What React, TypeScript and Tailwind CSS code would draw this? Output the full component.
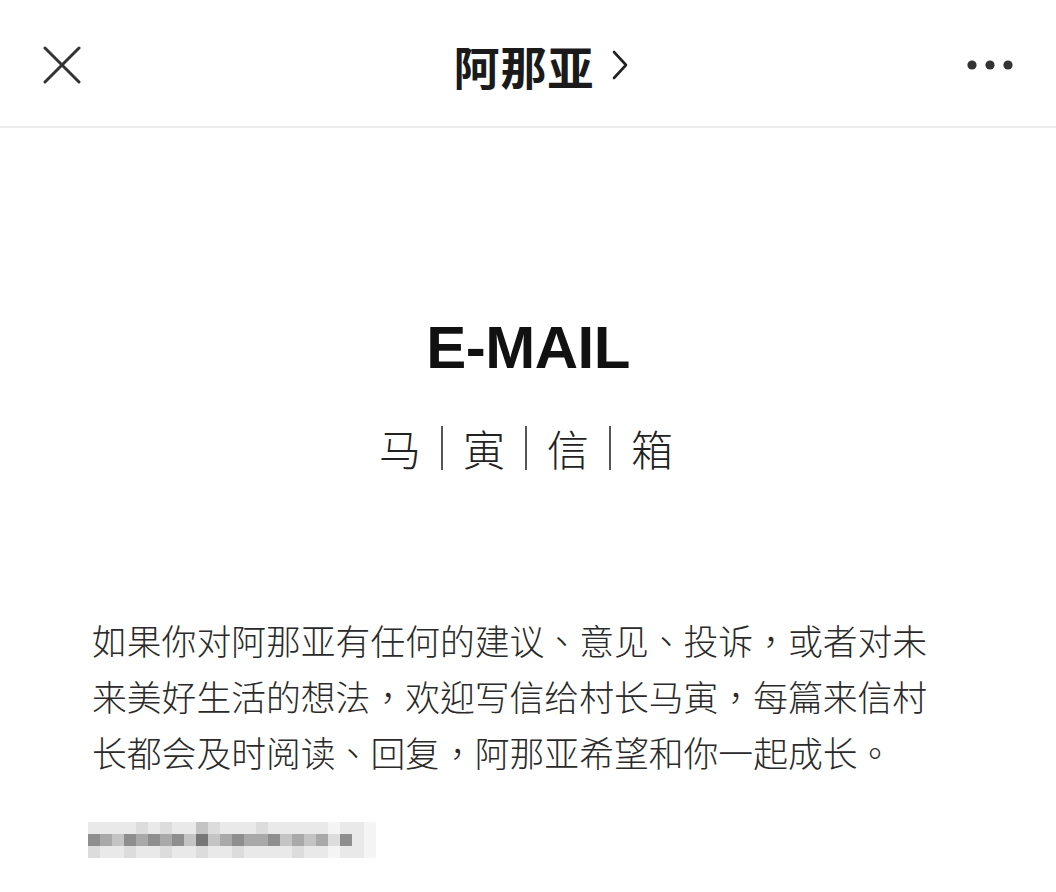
import React from "react";

const shades = [
  "bg-[#f4f4f4]",
  "bg-[#e9e9e9]",
  "bg-[#dcdcdc]",
  "bg-[#c4c4c4]",
  "bg-[#a9a9a9]",
  "bg-[#8e8e8e]",
  "bg-[#777777]",
];

// pixelated (blurred) e-mail address
const mosaic = [
  [1, 1, 1, 1, 2, 1, 2, 1, 1, 3, 2, 1, 1, 1, 2, 1, 1, 1, 1, 1, 0, 1, 1, 0],
  [5, 4, 3, 5, 4, 5, 4, 5, 3, 6, 3, 4, 5, 4, 4, 5, 3, 4, 3, 4, 2, 5, 1, 0],
  [2, 1, 1, 2, 1, 1, 2, 1, 1, 2, 1, 1, 2, 1, 1, 1, 1, 2, 1, 1, 0, 1, 1, 0],
];

const CloseIcon = () => (
  <svg width="38" height="38" viewBox="0 0 38 38" fill="none">
    <path d="M2 2 L36 36 M36 2 L2 36" stroke="#333" strokeWidth="3" strokeLinecap="round" />
  </svg>
);

const MoreIcon = () => (
  <svg width="46" height="10" viewBox="0 0 46 10">
    <circle cx="5" cy="5" r="4.6" fill="#333" />
    <circle cx="23" cy="5" r="4.6" fill="#333" />
    <circle cx="41" cy="5" r="4.6" fill="#333" />
  </svg>
);

const Chevron = () => (
  <svg width="18" height="30" viewBox="0 0 18 30" fill="none">
    <path d="M3 2 L15 15 L3 28" stroke="#222" strokeWidth="2.6" strokeLinecap="round" strokeLinejoin="round" />
  </svg>
);

export default function App() {
  const cjk = "font-['Noto_Sans_CJK_SC','Noto_Sans',sans-serif]";
  const chars = ["马", "寅", "信", "箱"];

  return (
    <div className={`w-[1056px] h-[892px] bg-white overflow-hidden ${cjk}`}>
      <div className="h-[128px] border-b-2 border-[#ececec] flex items-center justify-between pl-[43px] pr-[43px] pt-[4px] relative">
        <div>
          <CloseIcon />
        </div>
        <div className="absolute left-0 right-0 top-[4px] bottom-0 flex justify-center items-center gap-[16px] pl-[26px] pointer-events-none">
          <span className="text-[46px] font-bold text-[#1a1a1a] leading-none tracking-[1px]">阿那亚</span>
          <Chevron />
        </div>
        <div>
          <MoreIcon />
        </div>
      </div>

      <div className="flex flex-col items-center pt-[190px]">
        <div className="font-['Liberation_Sans',sans-serif] font-bold text-[60px] leading-none text-[#111] tracking-[-0.5px]">
          E-MAIL
        </div>
        <div className="flex items-center mt-[48px] text-[42px] font-light leading-none text-[#222] pr-[4px]">
          {chars.map((c, i) => (
            <React.Fragment key={c}>
              {i > 0 && <span className="w-[2px] h-[44px] bg-[#555] mx-[20px]" />}
              <span>{c}</span>
            </React.Fragment>
          ))}
        </div>
      </div>

      <div className="pl-[92px] pt-[142px]">
        <p className="w-[850px] font-['Noto_Sans_CJK_TC','Noto_Sans_CJK_SC',sans-serif] text-[34.8px] leading-[56px] text-[#2a2a2a] font-light">
          如果你对阿那亚有任何的建议、意见、投诉，或者对未来美好生活的想法，欢迎写信给村长马寅，每篇来信村长都会及时阅读、回复，阿那亚希望和你一起成长。
        </p>
        <div className="mt-[42px] flex flex-col w-fit ml-[-4px]">
          {mosaic.map((row, r) => (
            <div key={r} className="flex">
              {row.map((v, c) => (
                <div key={c} className={`w-[12px] h-[12px] ${shades[v]}`} />
              ))}
            </div>
          ))}
        </div>
      </div>
    </div>
  );
}
